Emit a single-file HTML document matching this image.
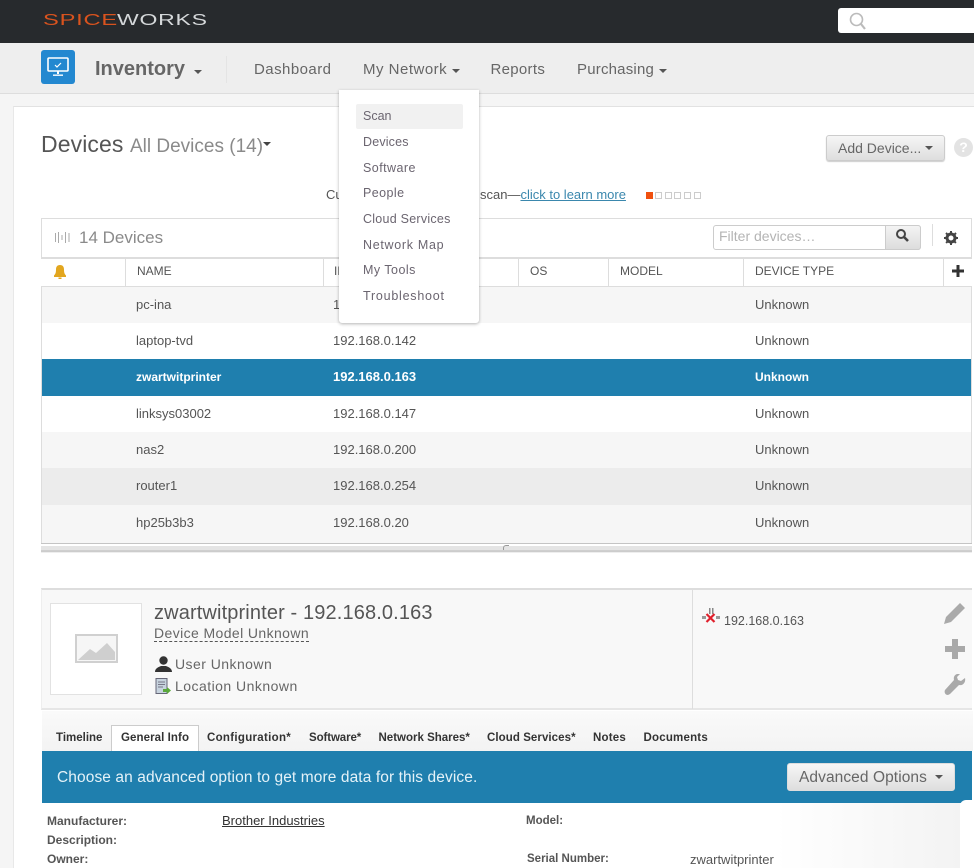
<!DOCTYPE html>
<html><head><meta charset="utf-8"><title>Inventory</title>
<style>
html,body{margin:0;padding:0}
body{width:974px;height:868px;overflow:hidden;position:relative;background:#f5f5f5;font-family:"Liberation Sans",sans-serif;color:#555}
.a,.t{position:absolute}
.t{white-space:nowrap;line-height:1}
.n{font-size:15px;color:#666;letter-spacing:.45px}
.m{font-size:12.5px;color:#6b6570;left:363px}
.h{font-size:12px;color:#555;top:265px}
.c{font-size:13px;color:#555}
.w{color:#fff;font-weight:bold}
.tb{font-size:11.5px;font-weight:bold;color:#333;top:733px}
.l{font-size:12px;font-weight:bold;color:#555}
.car{position:absolute;width:0;height:0;border-left:4px solid transparent;border-right:4px solid transparent;border-top:4px solid #555}
.btn{position:absolute;background:linear-gradient(#f6f6f6,#dedede);border:1px solid #ccc;border-radius:3px;box-sizing:border-box}
.sq{position:absolute;top:192px;width:7px;height:7px;border:1px solid #ccc;box-sizing:border-box}
</style></head><body>
<div class="a" style="left:0;top:0;width:974px;height:43px;background:#272a2d"></div>
<div class="t" style="left:43px;top:13px;font-size:15.5px;letter-spacing:.5px;transform:scaleX(1.53);transform-origin:left;color:#d9531e">SPICE</div>
<div class="t" style="left:117px;top:13px;font-size:15.5px;letter-spacing:.5px;transform:scaleX(1.485);transform-origin:left;color:#d5d8da">WORKS</div>
<div class="a" style="left:838px;top:8px;width:136px;height:25px;background:#fff;border-radius:3px 0 0 3px"></div>
<svg class="a" style="left:848px;top:11px" width="20" height="20" viewBox="0 0 20 20"><circle cx="8.5" cy="8.5" r="6" fill="none" stroke="#bbb" stroke-width="1.6"/><path d="M13 13l4 5" stroke="#bbb" stroke-width="2.2"/></svg>

<div class="a" style="left:0;top:43px;width:974px;height:50px;background:#eee;border-bottom:1px solid #ddd"></div>
<div class="a" style="left:41px;top:50px;width:34px;height:34px;background:#2388d0;border-radius:3px"></div>
<svg class="a" style="left:46px;top:55px" width="24" height="24" viewBox="0 0 24 24"><rect x="2" y="3" width="20" height="13" rx="1" fill="none" stroke="#fff" stroke-width="1.6"/><path d="M9 10l2 2 4-4" fill="none" stroke="#fff" stroke-width="1.2"/><path d="M11 16h2v3h-2zM7 19.5h10v1.4H7z" fill="#fff"/></svg>
<div class="t" style="left:95px;top:59px;font-size:20px;font-weight:bold;color:#666;letter-spacing:0">Inventory</div>
<div class="car" style="left:194px;top:70px"></div>
<div class="a" style="left:226px;top:56px;width:1px;height:27px;background:#e4e4e4"></div>
<div class="t n" style="left:254px;top:62px">Dashboard</div>
<div class="t n" style="left:363px;top:62px;letter-spacing:.5px">My Network</div>
<div class="car" style="left:452px;top:69px"></div>
<div class="t n" style="left:490.5px;top:62px;letter-spacing:.3px">Reports</div>
<div class="t n" style="left:577px;top:62px;letter-spacing:.2px">Purchasing</div>
<div class="car" style="left:659px;top:69px"></div>

<div class="a" style="left:13px;top:106px;width:961px;height:762px;background:#fff;border-top:1px solid #e2e2e2;border-left:1px solid #e8e8e8;box-sizing:border-box"></div>
<div class="t" style="left:41px;top:133px;font-size:23px;color:#555;letter-spacing:.1px">Devices</div>
<div class="t" style="left:130px;top:137px;font-size:19px;color:#8a8a8a;letter-spacing:0">All Devices (14)</div>
<div class="car" style="left:263px;top:142px;border-top-color:#444"></div>
<div class="btn" style="left:826px;top:135px;width:119px;height:26px;box-shadow:0 1px 1px #ccc"></div>
<div class="t" style="left:838px;top:141px;font-size:14px;color:#666;letter-spacing:0">Add Device...</div>
<div class="car" style="left:925px;top:146px"></div>
<div class="a" style="left:954px;top:138px;width:19px;height:19px;border-radius:50%;background:#e3e3e3;color:#fff;font:bold 14px/19px 'Liberation Sans',sans-serif;text-align:center">?</div>

<div class="t" style="left:326px;top:188px;font-size:13px;color:#555">Cu</div>
<div class="t" style="left:480px;top:188px;font-size:13px;color:#555">scan—<span style="color:#3a87ad;text-decoration:underline">click to learn more</span></div>
<div class="a" style="left:646px;top:192px;width:7px;height:7px;background:#f0500f"></div>
<div class="sq" style="left:655px"></div><div class="sq" style="left:664.5px"></div><div class="sq" style="left:674px"></div><div class="sq" style="left:684px"></div><div class="sq" style="left:694px"></div>

<div class="a" style="left:41px;top:218px;width:931px;height:335px;border:1px solid #ddd;box-sizing:border-box;background:#fff"></div>
<svg class="a" style="left:55px;top:232px" width="15" height="11" viewBox="0 0 15 11"><path d="M.5 1v9M3.500 0v11M7 3v5M10.500 0v11M14 1v9" stroke="#aaa" stroke-width="1" fill="none"/></svg>
<div class="t" style="left:79px;top:229px;font-size:17px;color:#8a8a8a;letter-spacing:0">14 Devices</div>
<div class="a" style="left:713px;top:225px;width:208px;height:25px;border:1px solid #ccc;border-radius:3px;box-sizing:border-box;background:#fff"></div>
<div class="t" style="left:719px;top:229px;font-size:14px;color:#b4b4b4">Filter devices…</div>
<div class="a" style="left:885px;top:225px;width:36px;height:25px;background:linear-gradient(#f4f4f4,#ddd);border:1px solid #ccc;border-radius:0 3px 3px 0;box-sizing:border-box"></div>
<svg class="a" style="left:895px;top:228px" width="15" height="15" viewBox="0 0 15 15"><circle cx="6" cy="6" r="4" fill="none" stroke="#444" stroke-width="2"/><path d="M9 9l4 4" stroke="#444" stroke-width="2.6"/></svg>
<div class="a" style="left:932px;top:224px;width:1px;height:22px;background:#ddd"></div>
<svg class="a" style="left:944px;top:231px" width="14" height="14" viewBox="0 0 14 14"><circle cx="7" cy="7" r="4" fill="none" stroke="#444" stroke-width="3"/><path d="M7 0v14M0 7h14M2 2l10 10M12 2L2 12" stroke="#444" stroke-width="2" stroke-dasharray="2 10 2"/></svg>

<div class="a" style="left:41px;top:257px;width:931px;height:30px;background:#fff;border-top:2px solid #ddd;border-bottom:1px solid #ddd;box-sizing:border-box"></div>
<div class="a" style="left:125px;top:258px;width:1px;height:28px;background:#ddd"></div>
<div class="a" style="left:323px;top:258px;width:1px;height:28px;background:#ddd"></div>
<div class="a" style="left:518px;top:258px;width:1px;height:28px;background:#ddd"></div>
<div class="a" style="left:608px;top:258px;width:1px;height:28px;background:#ddd"></div>
<div class="a" style="left:743px;top:258px;width:1px;height:28px;background:#ddd"></div>
<div class="a" style="left:943px;top:258px;width:1px;height:28px;background:#ddd"></div>
<svg class="a" style="left:53px;top:265px" width="14" height="14" viewBox="0 0 13 14"><path d="M6.5 0C3.500 0 2.500 2 2.500 4.500C2.500 7.500 2 9 .5 10.500V12h12v-1.500C11 9 10.500 7.500 10.500 4.500C10.500 2 9.500 0 6.500 0zM5 12.500h3V14H5z" fill="#e2a61f"/></svg>
<div class="t h" style="left:137px">NAME</div>
<div class="t h" style="left:334px">IP</div>
<div class="t h" style="left:530px">OS</div>
<div class="t h" style="left:620px">MODEL</div>
<div class="t h" style="left:755px">DEVICE TYPE</div>
<svg class="a" style="left:952px;top:265px" width="12" height="12" viewBox="0 0 12 12"><path d="M4.500 0h3v4.500H12v3H7.500V12h-3V7.500H0v-3h4.500z" fill="#333"/></svg>

<div class="a" style="left:42px;top:287px;width:929px;height:36px;background:#f6f6f6"></div>
<div class="a" style="left:42px;top:359px;width:929px;height:37px;background:#1f7fae"></div>
<div class="a" style="left:42px;top:432px;width:929px;height:36px;background:#f6f6f6"></div>
<div class="a" style="left:42px;top:468px;width:929px;height:37px;background:#ececec"></div>
<div class="a" style="left:42px;top:505px;width:929px;height:38px;background:#f6f6f6"></div>

<div class="t c" style="left:136px;top:298px">pc-ina</div><div class="t c" style="left:333px;top:298px">1</div><div class="t c" style="left:755px;top:298px">Unknown</div>
<div class="t c" style="left:136px;top:334px">laptop-tvd</div><div class="t c" style="left:333px;top:334px">192.168.0.142</div><div class="t c" style="left:755px;top:334px">Unknown</div>
<div class="t c w" style="left:136px;top:371px;font-size:12px">zwartwitprinter</div><div class="t c w" style="left:333px;top:370px">192.168.0.163</div><div class="t c w" style="left:755px;top:371px;font-size:12px">Unknown</div>
<div class="t c" style="left:136px;top:407px">linksys03002</div><div class="t c" style="left:333px;top:407px">192.168.0.147</div><div class="t c" style="left:755px;top:407px">Unknown</div>
<div class="t c" style="left:136px;top:443px">nas2</div><div class="t c" style="left:333px;top:443px">192.168.0.200</div><div class="t c" style="left:755px;top:443px">Unknown</div>
<div class="t c" style="left:136px;top:479px">router1</div><div class="t c" style="left:333px;top:479px">192.168.0.254</div><div class="t c" style="left:755px;top:479px">Unknown</div>
<div class="t c" style="left:136px;top:516px">hp25b3b3</div><div class="t c" style="left:333px;top:516px">192.168.0.20</div><div class="t c" style="left:755px;top:516px">Unknown</div>

<div class="a" style="left:41px;top:543px;width:931px;height:11px;background:linear-gradient(#c4c4c4 0 1px,#fff 1px 3px,#e4e4e4 3px 7px,#bbb 8px,#fff 10px)"></div>
<div class="a" style="left:503px;top:545px;width:5px;height:4px;border-top:1px solid #999;border-left:1px solid #999;border-radius:3px 0 0 0"></div>

<div class="a" style="left:41px;top:588px;width:931px;height:122px;background:#f8f8f8;border-top:2px solid #ddd;border-bottom:2px solid #e6e6e6;border-left:1px solid #eee;box-sizing:border-box"></div>
<div class="a" style="left:692px;top:589px;width:1px;height:120px;background:#ddd"></div>
<div class="a" style="left:50px;top:603px;width:92px;height:92px;background:#fff;border:1px solid #e2e2e2;box-sizing:border-box"></div>
<svg class="a" style="left:75px;top:634px" width="43" height="29" viewBox="0 0 43 29"><rect x="1" y="1" width="41" height="27" fill="#f6f6f6" stroke="#d0d0d0" stroke-width="2"/><path d="M3 26L15 15l6 4 11-10 8 9v8z" fill="#cfcfcf"/></svg>
<div class="t" style="left:154px;top:603px;font-size:20px;color:#555;letter-spacing:.13px">zwartwitprinter - 192.168.0.163</div>
<div class="t" style="left:154px;top:626px;font-size:14px;color:#666;letter-spacing:.4px;border-bottom:1px dashed #555;padding-bottom:1px">Device Model Unknown</div>
<svg class="a" style="left:155px;top:656px" width="17" height="16" viewBox="0 0 17 16"><circle cx="8.500" cy="4.500" r="4.200" fill="#333"/><path d="M0 16c0-4 4-5 6-6h5c2 1 6 2 6 6z" fill="#333"/></svg>
<div class="t" style="left:175px;top:657px;font-size:14px;color:#666;letter-spacing:.45px">User Unknown</div>
<svg class="a" style="left:155px;top:678px" width="16" height="17" viewBox="0 0 16 17"><rect x="1" y="0.500" width="11" height="15" fill="#c7d3de" stroke="#667" stroke-width="1"/><path d="M3 4h7M3 6.500h7M3 9h5" stroke="#778" stroke-width="1"/><path d="M8 11h4V9l4 3.500-4 3.500v-2H8z" fill="#5aa83c"/></svg>
<div class="t" style="left:175px;top:679px;font-size:14px;color:#666;letter-spacing:.47px">Location Unknown</div>
<svg class="a" style="left:702px;top:608px" width="18" height="18" viewBox="0 0 18 18"><path d="M7 0h1.500v6H7zM10 0h1.500v6H10z" fill="#888"/><path d="M0 8h4v3H0zM14 8h4v3h-4z" fill="#999"/><path d="M4.500 6l8 8M12.500 6l-8 8" stroke="#e0202c" stroke-width="2.200"/></svg>
<div class="t" style="left:724px;top:615px;font-size:12.500px;color:#555">192.168.0.163</div>
<svg class="a" style="left:943px;top:602px" width="23" height="22" viewBox="0 0 23 22"><path d="M17 1l5 5L8 20l-7 2 2-7z" fill="#aaa"/></svg>
<svg class="a" style="left:945px;top:639px" width="20" height="20" viewBox="0 0 20 20"><path d="M7 0h6v7h7v6h-7v7H7v-7H0V7h7z" fill="#a9a9a9"/></svg>
<svg class="a" style="left:944px;top:674px" width="22" height="22" viewBox="0 0 22 22"><path d="M21 4l-4 3-3-1-1-3 3-3c-4-1-7 2-6 6L1 16c-1 2 0 5 3 5l2-1 9-9c4 1 7-3 6-7z" fill="#a9a9a9"/></svg>

<div class="a" style="left:42px;top:711px;width:931px;height:40px;background:linear-gradient(#fafafa,#f3f3f3)"></div>
<div class="a" style="left:111px;top:725px;width:88px;height:26px;background:#fff;border:1px solid #ccc;border-bottom:none;box-sizing:border-box"></div>
<div class="t tb" style="left:56px">Timeline</div>
<div class="t tb" style="left:121px;letter-spacing:.08px">General Info</div>
<div class="t tb" style="left:207px;letter-spacing:.3px">Configuration*</div>
<div class="t tb" style="left:309px;letter-spacing:-.1px">Software*</div>
<div class="t tb" style="left:378.500px">Network Shares*</div>
<div class="t tb" style="left:487px;letter-spacing:.07px">Cloud Services*</div>
<div class="t tb" style="left:593px;letter-spacing:.2px">Notes</div>
<div class="t tb" style="left:643.500px;letter-spacing:.2px">Documents</div>

<div class="a" style="left:42px;top:751px;width:930px;height:52px;background:#1f7fae"></div>
<div class="t" style="left:57px;top:770px;font-size:15.500px;color:#e4f2f8;letter-spacing:.1px">Choose an advanced option to get more data for this device.</div>
<div class="btn" style="left:787px;top:763px;width:168px;height:28px;border-color:#ddd"></div>
<div class="t" style="left:799px;top:770px;font-size:15.500px;color:#666;letter-spacing:.08px">Advanced Options</div>
<div class="car" style="left:935px;top:775px"></div>

<div class="a" style="left:42px;top:803px;width:918px;height:65px;background:linear-gradient(90deg,#fff 0,#fff 80%,#f3f3f3 100%)"></div>
<div class="a" style="left:960px;top:800px;width:14px;height:68px;background:#fff;border-radius:6px 0 0 0"></div>
<div class="t l" style="left:47px;top:815px">Manufacturer:</div>
<div class="t" style="left:222px;top:814px;font-size:13px;color:#333;text-decoration:underline">Brother Industries</div>
<div class="t l" style="left:47px;top:834px">Description:</div>
<div class="t l" style="left:47px;top:853px">Owner:</div>
<div class="t l" style="left:526px;top:816px;font-size:11.5px">Model:</div>
<div class="t l" style="left:527px;top:854px;font-size:11.500px">Serial Number:</div>
<div class="t" style="left:690px;top:853px;font-size:13px;color:#555">zwartwitprinter</div>

<div class="a" style="left:339px;top:90px;width:140px;height:233px;background:#fff;border-radius:0 0 3px 3px;box-shadow:0 1px 3px rgba(0,0,0,.3)"></div>
<div class="a" style="left:355.500px;top:104px;width:107px;height:25px;background:#f1f1f1;border-radius:2px"></div>
<div class="t m" style="top:110px">Scan</div>
<div class="t m" style="top:136px;letter-spacing:.17px">Devices</div>
<div class="t m" style="top:161.500px;letter-spacing:.45px">Software</div>
<div class="t m" style="top:187px;letter-spacing:.43px">People</div>
<div class="t m" style="top:213px;letter-spacing:.25px">Cloud Services</div>
<div class="t m" style="top:238.500px;letter-spacing:.69px">Network Map</div>
<div class="t m" style="top:264px;letter-spacing:.47px">My Tools</div>
<div class="t m" style="top:290px;letter-spacing:.77px">Troubleshoot</div>
</body></html>
